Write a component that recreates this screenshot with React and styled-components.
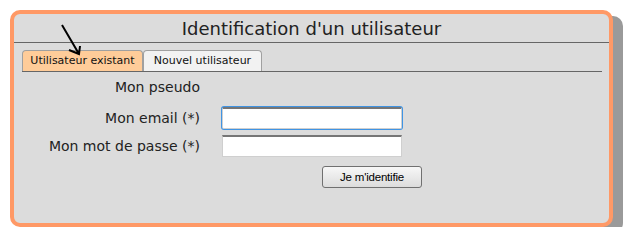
import React from "react";
import styled, { createGlobalStyle } from "styled-components";

const Global = createGlobalStyle`
  html, body { margin: 0; padding: 0; background: #fff; }
  body { font-family: "DejaVu Sans", Verdana, sans-serif; }
`;

const Page = styled.div`
  padding: 10px 0 0 10px;
`;

const Box = styled.div`
  position: relative;
  box-sizing: border-box;
  width: 603px;
  height: 217px;
  border: 4px solid #ff9966;
  border-radius: 10px;
  background: #dcdcdc;
  box-shadow: 10px 6px 0 #9a9a9a;
`;

const Title = styled.h1`
  margin: 0;
  height: 28px;
  border-bottom: 1px solid #666;
  font: 400 18px/30px "DejaVu Sans", Verdana, sans-serif;
  color: #222;
  text-align: center;
`;

const TabBar = styled.div`
  display: flex;
  margin: 7px 7px 0 8px;
  border-bottom: 1px solid #666;
  height: 21px;
`;

const Tab = styled.div`
  box-sizing: border-box;
  width: ${(p) => p.$w}px;
  height: 21px;
  border: 1px solid #a0a0a0;
  border-bottom: none;
  border-radius: 4px 4px 0 0;
  background: ${(p) => (p.$active ? "#ffcc99" : "#f2f2f2")};
  font: 400 11px/20px "DejaVu Sans", Verdana, sans-serif;
  color: #111;
  text-align: center;
  white-space: nowrap;
`;

const Form = styled.div`
  display: grid;
  grid-template-columns: 186px 180px;
  column-gap: 22px;
  align-items: center;
  padding-top: 6px;
`;

const Label = styled.label`
  text-align: right;
  font: 400 14px/18px "DejaVu Sans", Verdana, sans-serif;
  color: #222;
  margin-top: ${(p) => p.$mt || 0}px;
`;

const Field = styled.input`
  box-sizing: border-box;
  width: 180px;
  height: 22px;
  margin: ${(p) => p.$mt || 0}px 0 0;
  padding: 0 3px;
  background: #fff;
  border: 1px solid #cfcfcf;
  border-top: 2px solid #767676;
  outline: none;
  ${(p) => p.$focus && `box-shadow: 0 0 0 1px #3f94e4; border-radius: 2px;`}
`;

const Spacer = styled.div``;

const Button = styled.button`
  grid-column: 2;
  margin: 9px 0 0 100px;
  box-sizing: border-box;
  width: 100px;
  height: 22px;
  padding: 0;
  border: 1px solid #707070;
  border-radius: 3px;
  background: linear-gradient(#f7f7f7, #dcdcdc);
  font: 400 11.5px "Liberation Sans", Arial, sans-serif;
  letter-spacing: -0.2px;
  color: #000;
`;

const Arrow = styled.svg`
  position: absolute;
  left: 44px;
  top: 8px;
  overflow: visible;
`;

export default function App() {
  return (
    <>
      <Global />
      <Page>
        <Box>
          <Title>Identification d'un utilisateur</Title>
          <TabBar>
            <Tab $active $w={121}>Utilisateur existant</Tab>
            <Tab $w={119}>Nouvel utilisateur</Tab>
          </TabBar>
          <Form>
            <Label>Mon pseudo</Label>
            <Spacer />
            <Label $mt={11}>Mon email (*)</Label>
            <Field $mt={11} $focus type="text" />
            <Label $mt={6}>Mon mot de passe (*)</Label>
            <Field $mt={6} type="password" />
            <Button>Je m'identifie</Button>
          </Form>
          <Arrow width="26" height="36" viewBox="0 0 26 36">
            <path
              d="M4 3 L21 32 M11 28 L21 32 L22 24"
              fill="none"
              stroke="#000"
              strokeWidth="2"
            />
          </Arrow>
        </Box>
      </Page>
    </>
  );
}
